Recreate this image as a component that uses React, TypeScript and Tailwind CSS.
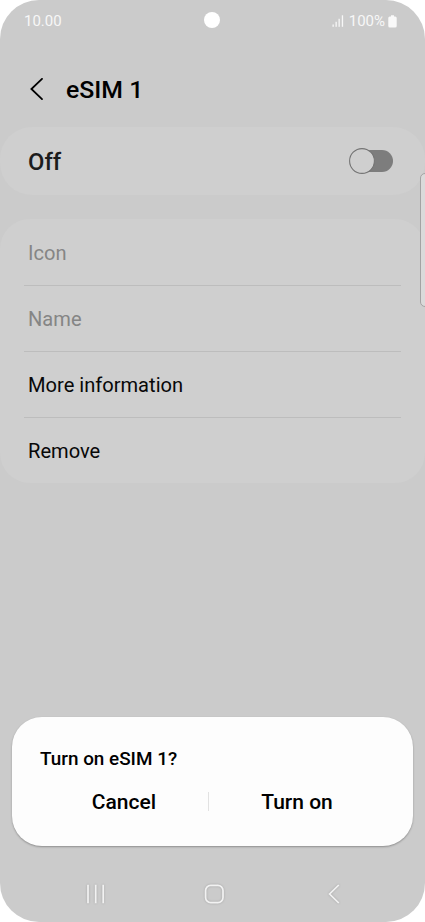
import React from 'react';
import clsx from 'clsx';

const rows = [
  { label: 'Icon', disabled: true },
  { label: 'Name', disabled: true },
  { label: 'More information', disabled: false },
  { label: 'Remove', disabled: false },
];

const StatusBar: React.FC = () => (
  <div className="relative flex items-center justify-between h-[42px] pl-[24px] pr-[28px] text-[15px] leading-none text-[#f7f7f7]">
    <span className="pt-px">10.00</span>
    <div className="absolute left-[204px] top-[12px] size-4 rounded-full bg-white" />
    <div className="flex items-center">
      <svg width="12" height="12" viewBox="0 0 12 12" fill="#f7f7f7" className="mr-[5px]">
        <rect x="0.5" y="9.5" width="1.3" height="2.3" />
        <rect x="3.5" y="6.8" width="1.3" height="5" />
        <rect x="6.5" y="3.8" width="1.3" height="8" />
        <rect x="9.8" y="0.3" width="1.3" height="11.5" />
      </svg>
      <span className="pt-px">100%</span>
      <svg width="9" height="13" viewBox="0 0 9 13" fill="#f9f9f9" className="ml-[3px]">
        <path d="M3 0.3h3v1.2h1.2a1.5 1.5 0 0 1 1.5 1.5v8a1.5 1.5 0 0 1-1.5 1.5H1.8A1.5 1.5 0 0 1 .3 11V3a1.5 1.5 0 0 1 1.5-1.5H3z" />
      </svg>
    </div>
  </div>
);

const Toggle: React.FC = () => (
  <svg width="46" height="28" viewBox="0 0 46 28">
    <rect x="5" y="3" width="40" height="22" rx="11" fill="#7d7d7d" />
    <circle cx="14" cy="14" r="12.4" fill="#cfcfcf" stroke="#747474" strokeWidth="1.1" />
  </svg>
);

const NavBar: React.FC = () => (
  <nav className="mt-auto h-[56px]">
    <svg width="425" height="56" viewBox="0 0 425 56" fill="none" stroke="#f2f2f2" strokeWidth="1.7" className="drop-shadow-[0_0_1px_rgba(0,0,0,0.2)]">
      <path d="M88 19.5v17M95.7 19.5v17M103.2 19.5v17" strokeLinecap="square" />
      <rect x="205.6" y="19.4" width="17.4" height="17.2" rx="5.2" />
      <path d="M338.8 19l-9.2 9 9.2 9" />
    </svg>
  </nav>
);

const App: React.FC = () => {
  return (
    <div className="w-[425px] h-[922px] bg-white">
      <div className="relative flex flex-col h-full overflow-hidden rounded-[39px] bg-[#cbcbcb] font-['Roboto',sans-serif] text-black">
        <StatusBar />

        <header className="flex items-center h-[85px] pl-[30px] pt-[9px]">
          <svg width="14" height="22" viewBox="0 0 14 22" fill="none" stroke="#000" strokeWidth="1.8" strokeLinecap="round">
            <path d="M12 0.9L1.4 11 12 21.1" />
          </svg>
          <h1 className="ml-[22px] pt-[2px] text-[24.8px] font-medium leading-none">eSIM 1</h1>
        </header>

        <section className="flex items-center justify-between h-[68px] pl-[28px] pr-[31px] rounded-[32px] bg-[#cfcfcf]">
          <span className="pt-[4px] text-[23.8px] font-medium leading-none text-[#1c1c1c]">Off</span>
          <Toggle />
        </section>

        <section className="mt-6 h-[264px] pt-px px-6 rounded-[30px] bg-[#cfcfcf]">
          {rows.map((row, i) => (
            <div
              key={row.label}
              className={clsx(
                'flex items-center pl-1 text-[20.1px] leading-none',
                row.disabled ? 'text-[#858585]' : 'text-[#080808]',
                i < rows.length - 1 ? 'h-[66px] pt-px border-b border-[#bdbdbd]' : 'h-[65px] pt-[2px]'
              )}
            >
              {row.label}
            </div>
          ))}
        </section>

        {/* Edge panel handle */}
        <div className="absolute left-[420px] top-[173px] w-[12px] h-[134px] rounded-[5px] border border-[#a3a3a3] bg-[#dadada]" />

        {/* Dialog */}
        <div className="mt-[234px] mx-3 h-[129px] rounded-[30px] bg-[#fdfdfd] shadow-[0_1px_2px_rgba(0,0,0,0.3)]">
          <p className="pt-[32px] pl-[28px] text-[18.9px] font-medium leading-[20px]">Turn on eSIM 1?</p>
          <div className="flex items-center mt-[21px] px-[28px] text-[21px] font-medium leading-[24px]">
            <button className="w-[168px] text-center">Cancel</button>
            <div className="w-px h-[19px] -mt-[2px] bg-[#e2e2e2]" />
            <button className="flex-1 text-center">Turn on</button>
          </div>
        </div>

        <NavBar />
      </div>
    </div>
  );
};

export default App;
